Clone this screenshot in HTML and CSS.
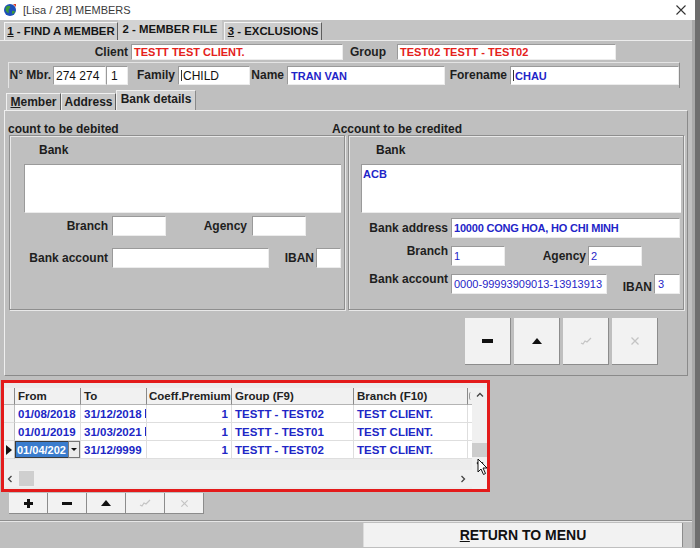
FILE: index.html
```html
<!DOCTYPE html>
<html>
<head>
<meta charset="utf-8">
<link rel="stylesheet" href="styles.css">
</head>
<body>
<div class="window">
  <div class="titlebar">
    <svg class="title-icon" viewBox="0 0 14 14" width="14" height="14">
      <circle cx="7" cy="7" r="6" fill="#1d4fb8"/>
      <path d="M3 4 Q5 2 7 3 Q8 5 6 6 Q5 8 6 10 Q4 10 3 8 Q2 6 3 4Z" fill="#3a9a3a"/>
      <path d="M9 8 Q11 7 12 9 Q11 11 9 11Z" fill="#3a9a3a"/>
      <path d="M10 1 L13 1 L13 4Z" fill="#d8402a"/>
    </svg>
    <span class="title">[Lisa / 2B] MEMBERS</span>
    <svg class="close" viewBox="0 0 10 10" width="10" height="10"><path d="M0.5 0.5 L9.5 9.5 M9.5 0.5 L0.5 9.5" stroke="#333" stroke-width="1.1"/></svg>
  </div>

  <div class="tabstrip">
    <div class="tab t1"><u>1</u> - FIND A MEMBER</div>
    <div class="tab t2 active">2 - MEMBER FILE</div>
    <div class="tab t3"><u>3</u> - EXCLUSIONS</div>
  </div>

  <div class="client-row">
    <span class="lbl l-client">Client</span>
    <div class="inp red i-client">TESTT TEST CLIENT.</div>
    <span class="lbl l-group">Group</span>
    <div class="inp red i-group">TEST02 TESTT - TEST02</div>
  </div>

  <div class="member-box">
    <span class="lbl l-mbr">N° Mbr.</span>
    <div class="inp black i-mbr1">274 274</div>
    <div class="inp black i-mbr2">1</div>
    <span class="lbl l-family">Family</span>
    <div class="inp black i-family"><span class="caret"></span>CHILD</div>
    <span class="lbl l-name">Name</span>
    <div class="inp blue i-name">TRAN VAN</div>
    <span class="lbl l-fore">Forename</span>
    <div class="inp blue i-fore"><span class="caret"></span>CHAU</div>
  </div>

  <div class="subtabs">
    <div class="stab s1"><u>M</u>ember</div>
    <div class="stab s2">Address</div>
    <div class="stab s3 active">Bank details</div>
  </div>

  <div class="tabpanel">
    <div class="heads">
      <span class="head h-left">count to be debited</span>
      <span class="head h-right">Account to be credited</span>
    </div>
    <div class="boxes">
      <div class="gbox">
        <div class="bank-lbl bl-left">Bank</div>
        <div class="area a-left"></div>
        <div class="frow fr-l1">
          <span class="lbl fl-left">Branch</span>
          <div class="inp i-branch-l"></div>
          <span class="lbl fl-agency-l">Agency</span>
          <div class="inp i-agency-l"></div>
        </div>
        <div class="frow fr-l2">
          <span class="lbl fl-left">Bank account</span>
          <div class="inp i-acc-l"></div>
          <span class="lbl fl-iban-l">IBAN</span>
          <div class="inp i-iban-l"></div>
        </div>
      </div>
      <div class="gbox">
        <div class="bank-lbl bl-right">Bank</div>
        <div class="area a-right blue">ACB</div>
        <div class="frow fr-r1">
          <span class="lbl fl-right">Bank address</span>
          <div class="inp blue i-addr">10000 CONG HOA, HO CHI MINH</div>
        </div>
        <div class="frow fr-r2">
          <span class="lbl fl-right up">Branch</span>
          <div class="inp blue thin i-branch-r">1</div>
          <span class="lbl fl-agency-r">Agency</span>
          <div class="inp blue thin i-agency-r">2</div>
        </div>
        <div class="frow fr-r3">
          <span class="lbl fl-right up">Bank account</span>
          <div class="inp blue thin i-acc-r">0000-99993909013-13913913</div>
          <span class="lbl fl-iban-r">IBAN</span>
          <div class="inp blue thin i-iban-r">3</div>
        </div>
      </div>
    </div>
    <div class="btnrow">
      <div class="bigbtn"><span class="ic-minus"></span></div>
      <div class="bigbtn"><span class="ic-tri"></span></div>
      <div class="bigbtn"><svg viewBox="0 0 12 8" width="12" height="8"><path d="M1 6 L3 7 L5 4 L7 5 L11 1" fill="none" stroke="#c4c4c4" stroke-width="1.2"/></svg></div>
      <div class="bigbtn"><svg viewBox="0 0 10 10" width="10" height="10"><path d="M1.5 1.5 L8.5 8.5 M8.5 1.5 L1.5 8.5" stroke="#c4c4c4" stroke-width="1.3"/></svg></div>
    </div>
  </div>

  <div class="grid">
    <div class="grid-main">
      <div class="g-row g-head">
        <div class="c c-ind"></div>
        <div class="c c-from">From</div>
        <div class="c c-to">To</div>
        <div class="c c-coef">Coeff.Premium</div>
        <div class="c c-group">Group (F9)</div>
        <div class="c c-branch">Branch (F10)</div>
        <div class="c c-part"><span class="part-mark"></span></div>
      </div>
      <div class="g-row g-data">
        <div class="c c-ind"></div>
        <div class="c c-from">01/08/2018</div>
        <div class="c c-to">31/12/2018<span class="cut"></span></div>
        <div class="c c-coef num">1</div>
        <div class="c c-group">TESTT - TEST02</div>
        <div class="c c-branch">TEST CLIENT.</div>
        <div class="c c-part"></div>
      </div>
      <div class="g-row g-data">
        <div class="c c-ind"></div>
        <div class="c c-from">01/01/2019</div>
        <div class="c c-to">31/03/2021<span class="cut"></span></div>
        <div class="c c-coef num">1</div>
        <div class="c c-group">TESTT - TEST01</div>
        <div class="c c-branch">TEST CLIENT.</div>
        <div class="c c-part"></div>
      </div>
      <div class="g-row g-data">
        <div class="c c-ind"><span class="ind-arrow"></span></div>
        <div class="c c-from sel"><span class="sel-text">01/04/202</span><span class="dd"><span class="dd-tri"></span></span></div>
        <div class="c c-to">31/12/9999</div>
        <div class="c c-coef num">1</div>
        <div class="c c-group">TESTT - TEST02</div>
        <div class="c c-branch">TEST CLIENT.</div>
        <div class="c c-part"></div>
      </div>
      <div class="g-empty"></div>
      <div class="hscroll">
        <svg viewBox="0 0 6 8" width="6" height="8"><path d="M4.5 1 L1.5 4 L4.5 7" fill="none" stroke="#444" stroke-width="1.3"/></svg>
        <span class="hthumb"></span>
        <svg class="arr-r" viewBox="0 0 6 8" width="6" height="8"><path d="M1.5 1 L4.5 4 L1.5 7" fill="none" stroke="#444" stroke-width="1.3"/></svg>
      </div>
    </div>
    <div class="vscroll">
      <svg class="varr" viewBox="0 0 8 6" width="8" height="6"><path d="M1 4.5 L4 1.5 L7 4.5" fill="none" stroke="#444" stroke-width="1.3"/></svg>
      <span class="vtrack"></span>
      <span class="vthumb"></span>
      <svg class="varr vdown" viewBox="0 0 8 6" width="8" height="6"><path d="M1 1.5 L4 4.5 L7 1.5" fill="none" stroke="#222" stroke-width="1.6"/></svg>
    </div>
    <svg class="cursor" viewBox="0 0 12 18" width="12" height="18"><path d="M1 1 L1 14 L4 11 L6.5 16.5 L8.5 15.5 L6 10 L10 10 Z" fill="#fff" stroke="#111" stroke-width="1"/></svg>
  </div>

  <div class="smallbtns">
    <div class="sbtn"><span class="ic-plus"></span></div>
    <div class="sbtn"><span class="ic-minus small"></span></div>
    <div class="sbtn"><span class="ic-tri"></span></div>
    <div class="sbtn"><svg viewBox="0 0 12 8" width="12" height="8"><path d="M1 6 L3 7 L5 4 L7 5 L11 1" fill="none" stroke="#c4c4c4" stroke-width="1.2"/></svg></div>
    <div class="sbtn"><svg viewBox="0 0 10 10" width="9" height="9"><path d="M1.5 1.5 L8.5 8.5 M8.5 1.5 L1.5 8.5" stroke="#c4c4c4" stroke-width="1.3"/></svg></div>
  </div>

  <div class="sep"></div>

  <div class="return-row">
    <div class="return-btn"><u>R</u>ETURN TO MENU</div>
  </div>
</div>
</body>
</html>
```

FILE: styles.css
```css
* { box-sizing: border-box; margin: 0; padding: 0; }
html, body { width: 700px; height: 548px; overflow: hidden; }
body {
  background: #6e6e6e;
  font-family: "Liberation Sans", Arial, sans-serif;
  font-size: 12px;
  color: #1c1c1c;
}
.window {
  width: 695px;
  height: 548px;
  background: #bfbfbf;
  border-right: 3px solid #a9a9a9;
  display: flex;
  flex-direction: column;
}

/* title bar */
.titlebar {
  height: 20px;
  flex: none;
  background: #fff;
  display: flex;
  align-items: center;
  padding-left: 3px;
  margin-right: -3px;
}
.title-icon { flex: none; }
.title { margin-left: 6px; font-size: 11px; color: #3a3a3a; }
.close { margin-left: auto; margin-right: 9px; }

/* main tabs */
.tabstrip {
  height: 21px;
  flex: none;
  display: flex;
  align-items: flex-end;
  padding-left: 4px;
  background: #c4c4c4;
  border-bottom: 1px solid #ececec;
}
.tab {
  height: 18px;
  font-weight: bold;
  font-size: 11.4px;
  line-height: 17px;
  text-align: center;
  background: #cdcdcd;
  border-top: 1px solid #f4f4f4;
  border-left: 1px solid #f4f4f4;
  border-right: 1px solid #5e5e5e;
  color: #151515;
  white-space: nowrap;
}
.tab.active { height: 20px; background: #d3d3d3; border: none; line-height: 18px; }
.t1 { width: 114px; }
.t2 { width: 104px; }
.t3 { width: 98px; margin-left: 2px; }

/* labels & inputs */
.lbl { font-weight: bold; font-size: 12px; color: #1e1e1e; white-space: nowrap; flex: none; }
.inp {
  flex: none;
  background: #fff;
  border-top: 1px solid #9a9a9a;
  border-left: 1px solid #9a9a9a;
  border-bottom: 1px solid #ececec;
  border-right: 1px solid #ececec;
  font-size: 11px;
  font-weight: bold;
  padding-left: 2px;
  white-space: nowrap;
  overflow: hidden;
  display: flex;
  align-items: center;
}
.red { color: #e4211b; }
.blue { color: #1f25c8; }
.black { color: #111; font-weight: normal; font-size: 12px; }
.thin { font-weight: normal; }
.caret { width: 1px; height: 11px; background: #333; margin-right: 1px; }

/* client row */
.client-row { height: 21px; flex: none; display: flex; align-items: center; }
.l-client { width: 131px; text-align: right; padding-right: 3px; }
.i-client { width: 212px; height: 16px; }
.l-group { width: 54px; padding-left: 7px; }
.i-group { width: 219px; height: 16px; }

/* member box */
.member-box {
  height: 26px;
  flex: none;
  margin: 0 12px 0 8px;
  border-top: 1px solid #e4e4e4;
  border-left: 1px solid #e4e4e4;
  border-right: 1px solid #8c8c8c;
  display: flex;
  align-items: flex-start;
  padding-top: 3px;
}
.member-box .inp { height: 19px; }
.l-mbr { width: 44px; text-align: right; padding-right: 2px; line-height: 19px; }
.i-mbr1 { width: 53px; }
.i-mbr2 { width: 22px; padding-left: 4px; }
.l-family { width: 50px; text-align: right; padding-right: 3px; line-height: 19px; }
.i-family { width: 72px; }
.l-name { width: 37px; text-align: right; padding-right: 3px; line-height: 19px; }
.i-name { width: 158px; padding-left: 3px; }
.l-fore { width: 65px; text-align: right; padding-right: 3px; line-height: 19px; }
.i-fore { width: 169px; }

/* sub tabs */
.subtabs { height: 22px; flex: none; display: flex; align-items: flex-end; padding-left: 6px; }
.stab {
  height: 17px;
  font-weight: bold;
  font-size: 12px;
  line-height: 16px;
  text-align: center;
  background: #c6c6c6;
  border-top: 1px solid #f0f0f0;
  border-left: 1px solid #f0f0f0;
  border-right: 1px solid #5e5e5e;
}
.stab.active { height: 20px; background: #d2d2d2; border-right: 1px solid #8a8a8a; line-height: 17px; }
.s1 { width: 55px; }
.s2 { width: 55px; }
.s3 { width: 80px; }

/* tab panel */
.tabpanel {
  height: 266px;
  flex: none;
  margin-left: 4px;
  width: 684px;
  border-top: 1px solid #efefef;
  border-left: 1px solid #efefef;
  border-right: 1px solid #8a8a8a;
  border-bottom: 1px solid #8a8a8a;
  display: flex;
  flex-direction: column;
}
.heads { height: 12px; margin-top: 12px; display: flex; align-items: flex-end; padding-left: 3px; }
.head { font-weight: bold; font-size: 12px; line-height: 12px; white-space: nowrap; }
.h-left { width: 324px; }
.boxes { display: flex; gap: 3px; margin-left: 4px; height: 175px; }
.gbox {
  width: 336px;
  height: 175px;
  border: 1px solid #8e8e8e;
  box-shadow: inset 1px 1px 0 #e8e8e8, 1px 1px 0 #e8e8e8;
  display: flex;
  flex-direction: column;
}
.bank-lbl { font-weight: bold; font-size: 12px; margin-top: 8px; height: 13px; line-height: 13px; }
.bl-left { padding-left: 29px; }
.bl-right { padding-left: 27px; }
.area {
  height: 49px;
  margin-top: 7px;
  background: #fff;
  border-top: 1px solid #9a9a9a;
  border-left: 1px solid #9a9a9a;
  border-bottom: 1px solid #ececec;
  font-size: 11px;
  font-weight: bold;
  padding: 3px 0 0 1px;
}
.a-left { margin-left: 14px; width: 317px; }
.a-right { margin-left: 12px; width: 320px; }
.frow { display: flex; align-items: center; height: 20px; }
.frow .inp { height: 20px; }
.fr-l1 { margin-top: 3px; }
.fr-l2 { margin-top: 12px; }
.fl-left { width: 98px; text-align: right; }
.i-branch-l { width: 54px; margin-left: 4px; }
.fl-agency-l { width: 81px; text-align: right; }
.i-agency-l { width: 54px; margin-left: 5px; }
.i-acc-l { width: 157px; margin-left: 4px; }
.fl-iban-l { width: 45px; text-align: right; }
.i-iban-l { width: 25px; margin-left: 2px; }

.fr-r1 { margin-top: 5px; }
.fr-r2 { margin-top: 8px; }
.fr-r3 { margin-top: 8px; }
.fl-right { width: 99px; text-align: right; }
.up { align-self: flex-start; margin-top: -2px; }
.i-addr { width: 229px; margin-left: 3px; font-size: 11px; letter-spacing: -0.2px; }
.i-branch-r { width: 54px; margin-left: 3px; }
.fl-agency-r { width: 81px; text-align: right; }
.i-agency-r { width: 54px; margin-left: 2px; }
.i-acc-r { width: 156px; margin-left: 3px; font-size: 11px; }
.fl-iban-r { width: 45px; text-align: right; padding-top: 5px; }
.i-iban-r { width: 26px; margin-left: 2px; padding-left: 3px; }

/* big action buttons */
.btnrow { display: flex; justify-content: flex-end; gap: 3px; padding-right: 29px; margin-top: 8px; }
.bigbtn {
  width: 46px;
  height: 47px;
  background: #f2f2f2;
  border-right: 1px solid #8c8c8c;
  border-bottom: 1px solid #8c8c8c;
  display: flex;
  align-items: center;
  justify-content: center;
}
.ic-minus { display: block; width: 11px; height: 4px; background: #111; }
.ic-minus.small { width: 10px; height: 3px; }
.ic-tri { display: block; width: 0; height: 0; border-left: 5px solid transparent; border-right: 5px solid transparent; border-bottom: 6px solid #111; }
.ic-plus { display: block; width: 9px; height: 9px; background:
  linear-gradient(#111, #111) center / 9px 3px no-repeat,
  linear-gradient(#111, #111) center / 3px 9px no-repeat; }

/* grid */
.grid {
  position: relative;
  flex: none;
  margin: 4px 0 0 1px;
  width: 489px;
  height: 112px;
  border: 3px solid #e31b1b;
  background: #ececec;
  display: flex;
  padding-top: 5px;
}
.grid-main { width: 468px; display: flex; flex-direction: column; }
.g-row { display: flex; height: 18px; }
.g-head { height: 17px; background: #f1f1f1; }
.c {
  flex: none;
  height: 100%;
  white-space: nowrap;
  overflow: hidden;
  font-size: 11.5px;
  font-weight: bold;
  padding-left: 3px;
  display: flex;
  align-items: center;
}
.g-head .c { border-right: 1px solid #8a8a8a; border-bottom: 1px solid #b4b4b4; color: #222; }
.g-head .c-coef { padding-left: 2px; }
.g-data { background: #fff; }
.g-data .c { border-right: 1px solid #dedede; border-bottom: 1px solid #dedede; color: #2026c6; }
.c-ind { width: 11px; padding: 0; background: #f1f1f1; }
.g-data .c-ind { background: #f4f4f4; border-right: 1px solid #bdbdbd; }
.c-from { width: 66px; }
.c-to { width: 66px; }
.cut { flex: none; width: 2px; height: 9px; margin-left: 3px; background: #2026c6; }
.c-coef { width: 85px; }
.c-group { width: 122px; }
.c-branch { width: 114px; }
.c-part { width: 4px; padding: 0; }
.part-mark { width: 2px; height: 8px; border-left: 1px solid #999; border-radius: 2px 0 0 2px; margin-left: 1px; }
.g-head .c-part { border-right: none; }
.g-data .c-part { border-right: none; }
.num { justify-content: flex-end; padding-right: 3px; }
.ind-arrow { display: block; width: 0; height: 0; margin-left: 2px; border-top: 5px solid transparent; border-bottom: 5px solid transparent; border-left: 6px solid #111; }
.sel { padding: 0; }
.sel-text { flex: none; width: 53px; height: 100%; background: #3a7ccd; color: #fff; overflow: visible; padding-left: 1px; font-size: 11px; line-height: 16px; border: 1px solid #3a3a3a; border-right: none; }
.g-data .c.sel { color: #fff; }
.dd { flex: none; width: 12px; height: 100%; background: #ececec; border: 1px solid #777; display: flex; align-items: center; justify-content: center; }
.dd-tri { width: 0; height: 0; border-left: 3px solid transparent; border-right: 3px solid transparent; border-top: 3px solid #111; }
.g-empty { height: 11px; background: #ececec; }
.hscroll { height: 17px; background: #f0f0f0; display: flex; align-items: center; padding-left: 3px; }
.hthumb { width: 15px; height: 15px; background: #cfcfcf; margin-left: 6px; }
.arr-r { margin-left: auto; margin-right: 6px; }
.vscroll { width: 15px; display: flex; flex-direction: column; align-items: center; background: #f0f0f0; padding-top: 4px; }
.varr { flex: none; }
.vtrack { flex: 1; }
.vthumb { width: 15px; height: 14px; background: #cdcdcd; margin-bottom: 4px; }
.vdown { margin-bottom: 22px; }
.cursor { position: absolute; left: 473px; top: 75px; }

/* small buttons */
.smallbtns { display: flex; margin: 1px 0 0 9px; height: 21px; flex: none; }
.sbtn {
  width: 39px;
  height: 21px;
  background: #f2f2f2;
  border-right: 1px solid #8c8c8c;
  border-bottom: 1px solid #8c8c8c;
  display: flex;
  align-items: center;
  justify-content: center;
}

.sep { flex: none; margin-top: 6px; height: 2px; border-top: 1px solid #8e8e8e; border-bottom: 1px solid #e6e6e6; }

.return-row { display: flex; justify-content: flex-end; padding-right: 9px; margin-top: 1px; }
.return-btn {
  width: 320px;
  height: 24px;
  background: #f2f2f2;
  border-right: 1px solid #8c8c8c;
  border-left: 1px solid #dcdcdc;
  font-weight: bold;
  font-size: 14px;
  line-height: 24px;
  text-align: center;
  color: #111;
}
```
